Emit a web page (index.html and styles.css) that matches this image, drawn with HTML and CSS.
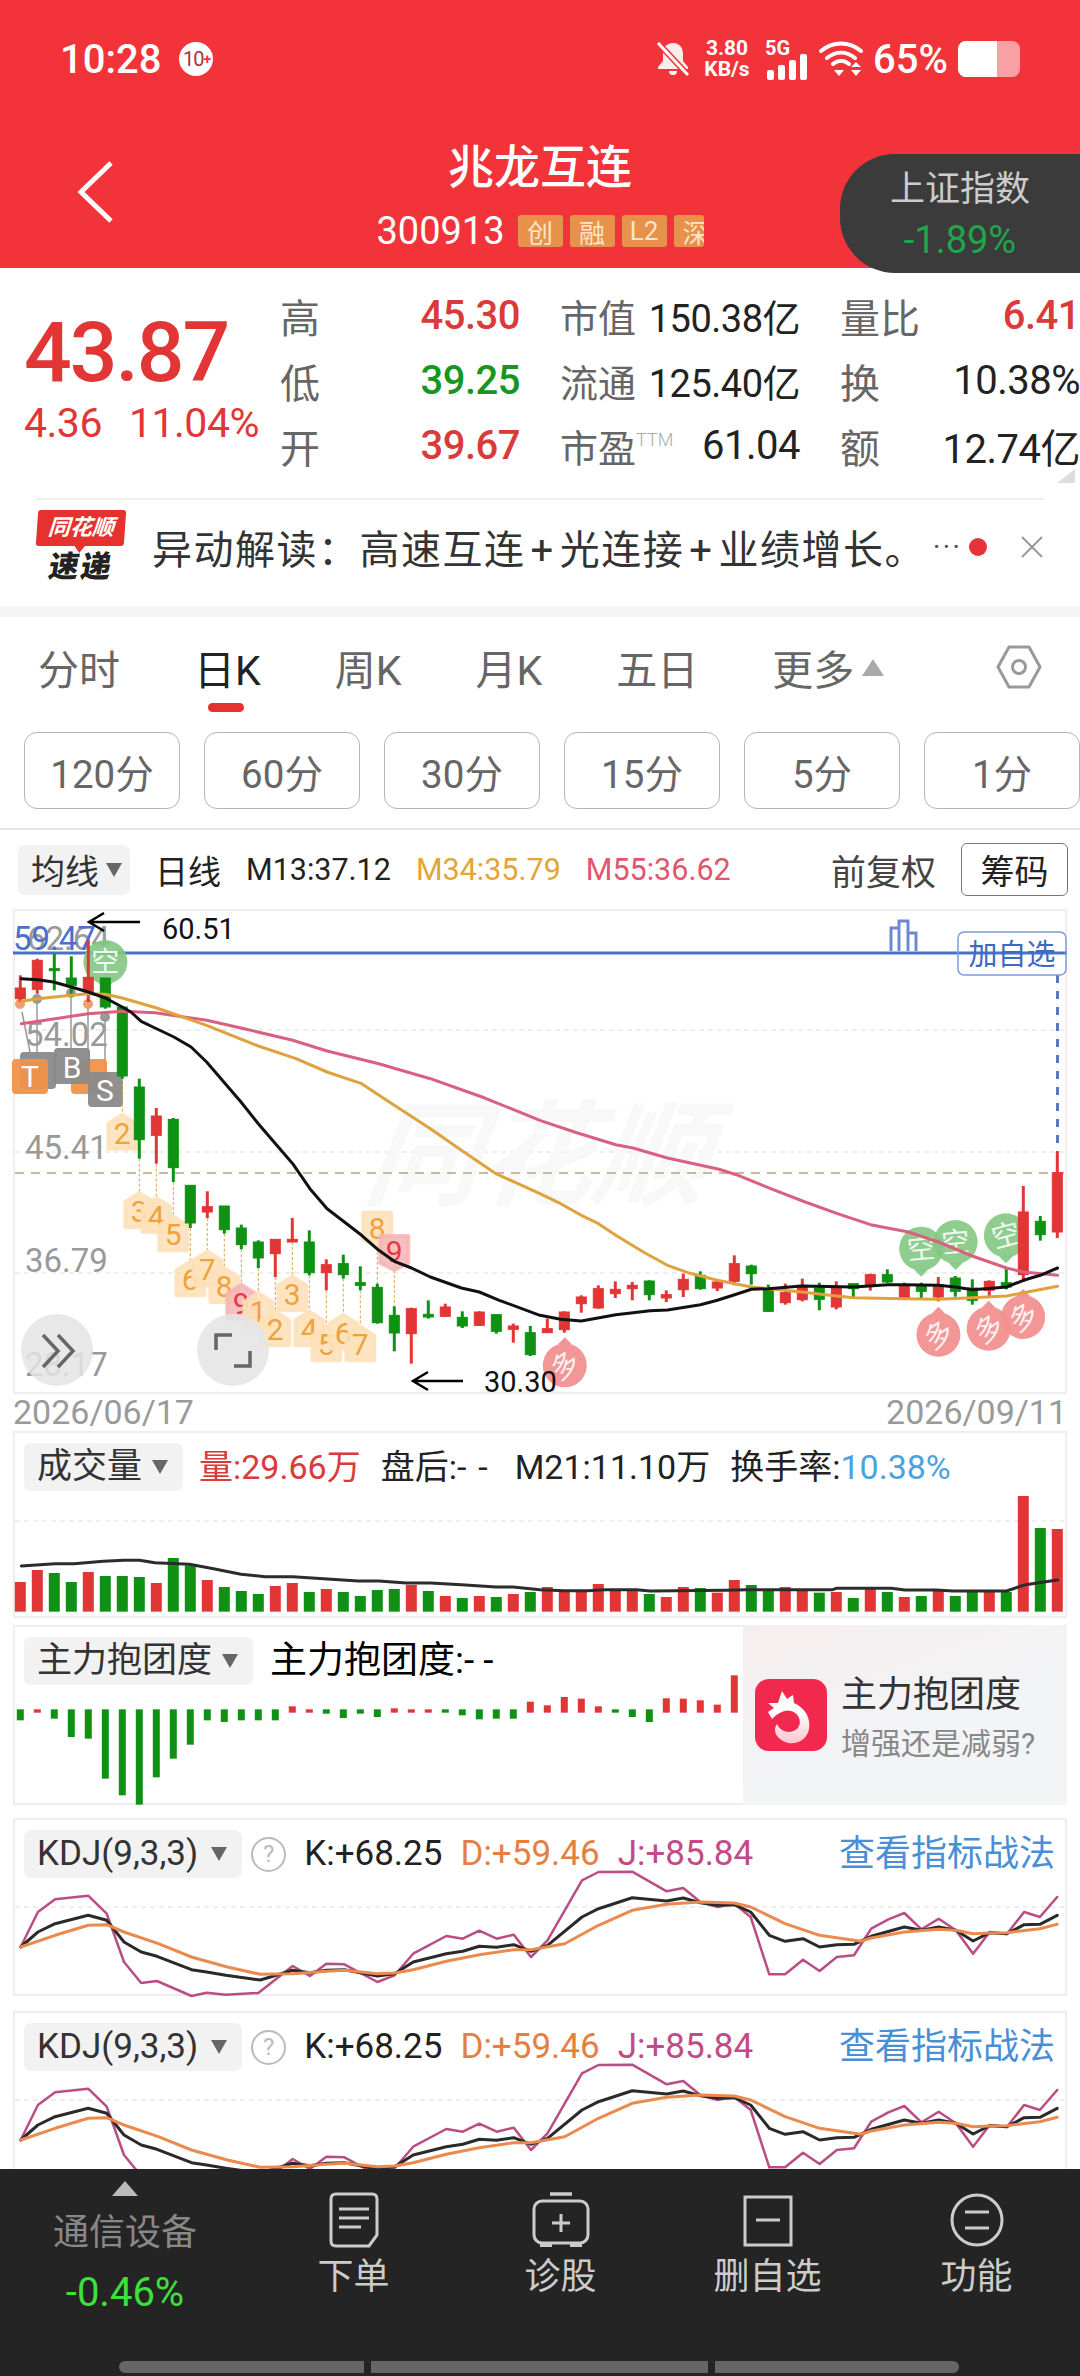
FILE: index.html
```html
<!DOCTYPE html>
<html lang="zh-CN">
<head>
    <meta charset="UTF-8">
    <meta name="viewport" content="width=device-width, initial-scale=1.0">
    <title>兆龙互连</title>
    <link rel="stylesheet" href="styles.css">
</head>
<body>
<div class="page">
    <header class="top">
        <div class="status">
            <span class="clock">10:28</span>
            <span class="count-badge">10<i>+</i></span>
            <div class="status-right">
                <svg class="bell" viewBox="0 0 34 36"><path d="M17 2c-7 0-10 5-10 11v7l-5 6v2h30v-2l-5-6v-7c0-6-3-11-10-11z" fill="#fff" fill-opacity=".9"/><path d="M13 30a4 4 0 0 0 8 0z" fill="#fff"/><path d="M2 2l30 32" stroke="#f2333a" stroke-width="6"/><path d="M2 2l30 32" stroke="#fff" stroke-width="3"/></svg>
                <div class="speed"><b>3.80</b><b>KB/s</b></div>
                <div class="net">
                    <b>5G</b>
                    <svg viewBox="0 0 42 26" width="42" height="26"><rect x="2" y="16" width="7" height="10" rx="2"/><rect x="13" y="11" width="7" height="15" rx="2"/><rect x="24" y="6" width="7" height="20" rx="2"/><rect x="35" y="0" width="7" height="26" rx="2"/></svg>
                </div>
                <svg class="wifi" viewBox="0 0 44 36"><path d="M2 10c12-10 28-10 40 0M8 17c9-7 19-7 28 0M14 23c5-4 11-4 16 0" fill="none" stroke="#fff" stroke-width="4" stroke-linecap="round"/><path d="M15 29h10l-5 6zM32 26l5-5 5 5zM32 29h10l-5 6z" fill="#fff"/></svg>
                <span class="battery-text">65%</span>
                <div class="battery"><div class="battery-fill"></div></div>
            </div>
        </div>
        <div class="title-bar">
            <svg class="back" viewBox="0 0 36 62" width="36" height="62"><path d="M34 2L4 31l30 29" fill="none" stroke="#fff" stroke-width="5"/></svg>
            <h1 class="name">兆龙互连</h1>
            <div class="code-row">
                <span class="code">300913</span>
                <span class="tag">创</span>
                <span class="tag">融</span>
                <span class="tag">L2</span>
                <span class="tag tag-cut">深</span>
            </div>
        </div>
        <div class="index-pill">
            <span class="index-name">上证指数</span>
            <span class="index-value">-1.89%</span>
        </div>
    </header>

    <section class="quote">
        <div class="price-box">
            <div class="price">43.87</div>
            <div class="change"><span>4.36</span><span>11.04%</span></div>
        </div>
        <div class="stats">
            <div class="stat"><span class="lbl">高</span><span class="val up">45.30</span></div>
            <div class="stat"><span class="lbl small">市值</span><span class="val dark narrow">150.38亿</span></div>
            <div class="stat"><span class="lbl">量比</span><span class="val up">6.41</span></div>
            <div class="stat"><span class="lbl">低</span><span class="val down">39.25</span></div>
            <div class="stat"><span class="lbl small">流通</span><span class="val dark narrow">125.40亿</span></div>
            <div class="stat"><span class="lbl">换</span><span class="val dark">10.38%</span></div>
            <div class="stat"><span class="lbl">开</span><span class="val up">39.67</span></div>
            <div class="stat"><span class="lbl small">市盈<sup>TTM</sup></span><span class="val dark">61.04</span></div>
            <div class="stat"><span class="lbl">额</span><span class="val dark">12.74亿</span></div>
        </div>
        <div class="corner"></div>
    </section>

    <section class="news">
        <div class="news-logo">
            <div class="news-flag"><span>同花顺</span></div>
            <div class="news-sub">速递</div>
        </div>
        <p class="news-text">异动解读：高速互连<i class="plus">+</i>光连接<i class="plus">+</i>业绩增长。</p>
        <span class="news-more">···</span>
        <span class="news-dot"></span>
        <svg class="news-close" viewBox="0 0 24 24" width="24" height="24"><path d="M2 2l20 20M22 2L2 22" stroke="#999" stroke-width="2"/></svg>
    </section>

    <nav class="tabs">
        <span class="tab">分时</span>
        <span class="tab active">日K</span>
        <span class="tab">周K</span>
        <span class="tab">月K</span>
        <span class="tab">五日</span>
        <span class="tab">更多<i class="tab-up"></i></span>
        <svg class="tab-gear" viewBox="0 0 48 48" width="48" height="48"><path d="M14 4h20l11 20-11 20H14L3 24z" fill="none" stroke="#999" stroke-width="3" stroke-linejoin="round"/><circle cx="24" cy="24" r="6.5" fill="none" stroke="#999" stroke-width="3"/></svg>
    </nav>

    <div class="periods">
        <span class="period">120分</span>
        <span class="period">60分</span>
        <span class="period">30分</span>
        <span class="period">15分</span>
        <span class="period">5分</span>
        <span class="period">1分</span>
    </div>

    <div class="ma-row">
        <span class="chip ma-chip">均线<i class="caret"></i></span>
        <span class="ma-kind">日线</span>
        <span>M13:37.12</span>
        <span class="c-m34">M34:35.79</span>
        <span class="c-m55">M55:36.62</span>
        <span class="ma-fq">前复权</span>
        <span class="ma-btn">筹码</span>
    </div>

    <div class="panel panel-main">
        <svg class="plot" viewBox="15 909 1050 481">
            <line class="grid" x1="15" x2="1065" y1="1028" y2="1028"/>
            <line class="grid" x1="15" x2="1065" y1="1150" y2="1150"/>
            <line class="grid" x1="15" x2="1065" y1="1271" y2="1271"/>
            <g transform="translate(362 1194) skewX(-8)"><text class="watermark" x="0" y="0">同花顺</text></g>
            <text class="axis" x="25" y="1044">54.02</text>
            <text class="axis" x="25" y="1157">45.41</text>
            <text class="axis" x="25" y="1270">36.79</text>
            <text class="axis" x="25" y="1374">28.17</text>
            <text class="axis" x="27" y="948">62.64</text>
            <text class="axis blue" x="13" y="948">59.47</text>
            <line class="prev-close" x1="15" x2="1065" y1="1171" y2="1171"/>
            <line class="high-line" x1="13" x2="1067" y1="951" y2="951"/>
            <g id="tradeMarks">
                <path class="trade-link" d="M37 997V1050M71 991V1046M105 1015V1070M88 1002V1057M22 1010L30 1050"/>
                <circle class="dot-o" cx="20" cy="1002" r="5"/>
                <circle class="dot-g" cx="37" cy="997" r="5"/>
                <circle class="dot-g" cx="71" cy="991" r="5"/>
                <circle class="dot-o" cx="88" cy="1002" r="5"/>
                <circle class="dot-g" cx="105" cy="1015" r="5"/>
                <rect class="trade-g" x="20" y="1050" width="36" height="37" rx="4"/>
                <rect class="trade-o" x="12" y="1057" width="36" height="35" rx="4"/>
                <rect class="trade-o" x="71" y="1057" width="36" height="35" rx="4"/>
                <rect class="trade-g" x="54" y="1046" width="36" height="36" rx="4"/>
                <rect class="trade-g" x="88" y="1070" width="35" height="35" rx="4"/>
                <text class="trade-t" x="30" y="1085">T</text>
                <text class="trade-t" x="72" y="1076">B</text>
                <text class="trade-t" x="105" y="1099">S</text>
            </g>
            <g id="badges"></g>
            <g id="pins"></g>
            <g id="candles"></g>
            <g id="maLines"></g>
            <path class="arrow" d="M140 920H90M104 911l-15 9 15 9"/>
            <text class="note" x="162" y="937">60.51</text>
            <path class="arrow" d="M463 1379H413M428 1370l-15 9 15 9"/>
            <text class="note" x="484" y="1390">30.30</text>
            <path class="bars-icon" d="M891 949V926H899V949M899 949V919H908V949M908 949V931H916V949"/>
            <line class="high-drop" x1="1057.5" x2="1057.5" y1="973" y2="1150"/>
            <rect class="add-box" x="958" y="930" width="108" height="43" rx="6"/>
            <text class="add-text" x="1012" y="963">加自选</text>
            <circle class="float-btn" cx="57" cy="1348" r="36"/>
            <path class="float-ico" d="M43 1333l15 16-15 16M58 1333l15 16-15 16"/>
            <circle class="float-btn" cx="233" cy="1348" r="36"/>
            <path class="float-ico" d="M216 1348V1333H232M234 1364H250V1349"/>
        </svg>
    </div>
    <div class="dates"><span>2026/06/17</span><span>2026/09/11</span></div>

    <div class="panel panel-vol">
        <svg class="plot" viewBox="15 1431 1050 183">
            <line class="grid" x1="15" x2="1065" y1="1519" y2="1519"/>
            <g id="volume"></g>
        </svg>
        <div class="panel-head head-wide">
            <span class="chip">成交量<i class="caret"></i></span>
            <span class="c-red">量:29.66万</span>
            <span>盘后:<i class="dash">--</i></span>
            <span class="tight">M21:11.10万</span>
            <span>换手率:<em class="c-blue">10.38%</em></span>
        </div>
    </div>

    <div class="panel panel-hold">
        <svg class="plot" viewBox="15 1625 1050 176">
            <g id="hold"></g>
        </svg>
        <div class="panel-head">
            <span class="chip">主力抱团度<i class="caret"></i></span>
            <span class="hold-label">主力抱团度:<i class="dash-hold">--</i></span>
        </div>
        <div class="promo">
            <div class="promo-icon">
                <svg viewBox="0 0 72 72" width="72" height="72"><defs><linearGradient id="drg" x1="0" y1="0" x2="0" y2="1"><stop offset="0.4" stop-color="#fff"/><stop offset="1" stop-color="#ffc4cf"/></linearGradient></defs><path fill="url(#drg)" d="M27 12l5 8 6-4 1 8C50 29 56 39 54 50 52 62 38 68 28 62 20 58 18 50 22 45c3 7 12 11 20 5 6-6 2-16-6-18-6-2-13 2-19 8l-4-7 6-4-6-5h10z"/></svg>
            </div>
            <div class="promo-text">
                <strong>主力抱团度</strong>
                <span>增强还是减弱?</span>
            </div>
        </div>
    </div>

    <div class="panel panel-kdj">
        <svg class="plot kdj-plot" viewBox="15 1818 1050 174"></svg>
        <div class="panel-head head-kdj">
            <span class="chip kdj-chip">KDJ(9,3,3)<i class="caret"></i></span>
            <span class="help">?</span>
            <span>K:+68.25</span>
            <span class="c-d">D:+59.46</span>
            <span class="c-j">J:+85.84</span>
            <span class="c-link">查看指标战法</span>
        </div>
    </div>

    <div class="panel panel-kdj panel-cut">
        <svg class="plot kdj-plot" viewBox="15 1818 1050 174"></svg>
        <div class="panel-head head-kdj">
            <span class="chip kdj-chip">KDJ(9,3,3)<i class="caret"></i></span>
            <span class="help">?</span>
            <span>K:+68.25</span>
            <span class="c-d">D:+59.46</span>
            <span class="c-j">J:+85.84</span>
            <span class="c-link">查看指标战法</span>
        </div>
    </div>

    <footer class="bottom">
        <div class="bottom-main">
            <div class="sector">
                <i class="sector-up"></i>
                <span class="sector-name">通信设备</span>
                <span class="sector-val">-0.46%</span>
            </div>
            <div class="action">
                <svg viewBox="0 0 50 56" width="50" height="56"><path d="M7 2h36q5 0 5 5v36l-8 11H7q-5 0-5-5V7q0-5 5-5z" fill="none" stroke="#ccc" stroke-width="3"/><path d="M10 17h30M10 26h30M10 35h22" stroke="#ccc" stroke-width="3"/></svg>
                <span>下单</span>
            </div>
            <div class="action">
                <svg viewBox="0 0 58 56" width="58" height="56"><path d="M18 2h22" stroke="#ccc" stroke-width="3.5"/><rect x="2" y="9" width="54" height="42" rx="8" fill="none" stroke="#ccc" stroke-width="3"/><path d="M29 22v18M20 31h18" stroke="#ccc" stroke-width="3"/><path d="M8 50h12v5H8zM38 50h12v5H38z" fill="#ccc"/></svg>
                <span>诊股</span>
            </div>
            <div class="action">
                <svg viewBox="0 0 50 56" width="50" height="56"><rect x="2" y="5" width="46" height="48" fill="none" stroke="#ccc" stroke-width="3"/><path d="M13 28h24" stroke="#ccc" stroke-width="3"/></svg>
                <span>删自选</span>
            </div>
            <div class="action action-last">
                <svg viewBox="0 0 56 56" width="56" height="56"><circle cx="28" cy="28" r="25" fill="none" stroke="#ccc" stroke-width="3"/><path d="M16 20h24M16 36h24" stroke="#ccc" stroke-width="3"/></svg>
                <span>功能</span>
            </div>
        </div>
        <div class="home-bar"><i></i><i></i><i></i></div>
    </footer>
</div>
<script src="chart.js"></script>
</body>
</html>
```

FILE: styles.css
```css
* {
    box-sizing: border-box;
}
body {
    margin: 0;
    background: #fff;
    font-family: Roboto, "Noto Sans CJK SC", sans-serif;
    color: #222;
}
i, em {
    font-style: normal;
}
.page {
    position: relative;
    width: 1080px;
    height: 2376px;
    overflow: hidden;
}

/* red header */
.top {
    position: relative;
    height: 268px;
    background: #f2333a;
    color: #fff;
}
.status {
    display: flex;
    align-items: center;
    height: 118px;
    padding: 0 60px;
}
.clock {
    font-size: 40px;
    font-weight: 500;
}
.count-badge {
    display: flex;
    align-items: center;
    justify-content: center;
    width: 34px;
    height: 34px;
    margin-left: 18px;
    border-radius: 50%;
    background: #fff;
    color: #a8323a;
    font-size: 20px;
    letter-spacing: -1px;
}
.count-badge i {
    color: #f2333a;
    font-size: 14px;
    font-weight: 700;
}
.status-right {
    display: flex;
    align-items: center;
    margin-left: auto;
}
.bell {
    width: 34px;
    height: 36px;
    margin-right: 13px;
}
.speed {
    display: flex;
    flex-direction: column;
    align-items: center;
    width: 48px;
    margin-right: 14px;
    font-size: 21px;
    line-height: 21px;
}
.net {
    display: flex;
    flex-direction: column;
    width: 44px;
    margin-right: 10px;
    font-size: 20px;
    line-height: 18px;
    fill: #fff;
}
.net svg {
    margin-top: -3px;
}
.wifi {
    width: 44px;
    height: 36px;
    margin-right: 10px;
}
.battery-text {
    width: 85px;
    font-size: 40px;
    font-weight: 500;
}
.battery {
    width: 62px;
    height: 36px;
    border-radius: 8px;
    background: #f9a0a4;
    overflow: hidden;
}
.battery-fill {
    width: 39px;
    height: 100%;
    background: #fff;
}
.title-bar {
    position: relative;
    display: flex;
    flex-direction: column;
    align-items: center;
    height: 150px;
}
.back {
    position: absolute;
    left: 77px;
    top: 43px;
}
.name {
    margin: 21px 0 0;
    font-size: 46px;
    font-weight: 500;
    line-height: 56px;
}
.code-row {
    display: flex;
    align-items: center;
    gap: 7px;
    margin-top: 20px;
}
.code {
    margin-right: 6px;
    font-size: 38px;
    line-height: 32px;
}
.tag {
    display: flex;
    align-items: center;
    justify-content: center;
    width: 45px;
    height: 32px;
    border-radius: 3px;
    background: #e7914a;
    color: #fde4c8;
    font-size: 26px;
    overflow: hidden;
}
.tag-cut {
    justify-content: flex-start;
    width: 30px;
    padding-left: 9px;
}
.index-pill {
    position: absolute;
    z-index: 2;
    top: 154px;
    left: 840px;
    display: flex;
    flex-direction: column;
    align-items: center;
    width: 240px;
    height: 119px;
    padding-top: 11px;
    border-radius: 55px 0 0 55px;
    background: #3b3b3b;
}
.index-name {
    color: #ccc;
    font-size: 35px;
    line-height: 50px;
}
.index-value {
    color: #1fa64a;
    font-size: 38px;
    line-height: 50px;
}

/* quote block */
.quote {
    position: relative;
    display: flex;
    height: 230px;
    padding-left: 24px;
}
.price-box {
    width: 257px;
    color: #e23535;
}
.price {
    margin-top: 40px;
    font-size: 84px;
    font-weight: 500;
    line-height: 90px;
    letter-spacing: -2px;
}
.change {
    display: flex;
    gap: 27px;
    margin-top: 3px;
    font-size: 41px;
    line-height: 44px;
    letter-spacing: -.5px;
}
.stats {
    display: grid;
    grid-template-columns: repeat(3, 240px);
    grid-auto-rows: 65px;
    column-gap: 40px;
    padding-top: 15px;
}
.stat {
    display: flex;
    align-items: center;
    justify-content: space-between;
}
.lbl {
    color: #666;
    font-size: 40px;
}
.lbl.small {
    font-size: 38px;
}
.lbl sup {
    color: #aaa;
    font-size: 18px;
    font-weight: 300;
    vertical-align: 16px;
    line-height: 0;
}
.val {
    font-size: 40px;
    font-weight: 500;
    letter-spacing: -.5px;
}
.up {
    color: #d93a3a;
}
.down {
    color: #17961f;
}
.dark {
    color: #222;
    font-weight: 400;
}
.narrow {
    font-size: 38px;
}
.corner {
    position: absolute;
    right: 5px;
    bottom: 15px;
    width: 0;
    height: 0;
    border-left: 18px solid transparent;
    border-bottom: 14px solid #ddd;
}

/* news strip */
.news {
    position: relative;
    display: flex;
    align-items: center;
    height: 119px;
    padding: 0 36px 11px 37px;
    border-bottom: 11px solid #f5f5f5;
}
.news::before {
    content: "";
    position: absolute;
    top: 0;
    left: 36px;
    right: 36px;
    border-top: 2px solid #efefef;
}
.news-logo {
    width: 88px;
    text-align: center;
}
.news-flag {
    position: relative;
    height: 36px;
    border-radius: 3px;
    background: #e5322f;
    transform: skewX(-4deg);
}
.news-flag::after {
    content: "";
    position: absolute;
    left: 38px;
    bottom: -7px;
    border-left: 6px solid transparent;
    border-right: 6px solid transparent;
    border-top: 8px solid #e5322f;
}
.news-flag span {
    color: #fff;
    font-size: 22px;
    font-weight: 700;
    line-height: 36px;
    font-style: italic;
}
.news-sub {
    margin-top: 4px;
    font-size: 30px;
    font-weight: 900;
    line-height: 34px;
    letter-spacing: 2px;
    transform: skewX(-10deg);
}
.news-text {
    flex: 0 0 771px;
    margin: 0 0 0 27px;
    font-size: 40px;
    letter-spacing: 1.5px;
    color: #333;
    white-space: nowrap;
}
.plus {
    margin: 0 5px;
}
.news-more {
    flex: 0 0 43px;
    color: #555;
    font-size: 30px;
    letter-spacing: 2px;
    text-align: center;
}
.news-dot {
    width: 18px;
    height: 18px;
    border-radius: 50%;
    background: #e8323a;
}
.news-close {
    margin-left: auto;
}

/* tabs */
.tabs {
    display: flex;
    align-items: center;
    gap: 74px;
    height: 100px;
    padding: 0 37px 0 38px;
    color: #666;
    font-size: 41px;
}
.tab {
    position: relative;
    display: flex;
    align-items: center;
}
.tab.active {
    color: #222;
}
.tab.active::after {
    content: "";
    position: absolute;
    left: 14px;
    bottom: -15px;
    width: 36px;
    height: 9px;
    border-radius: 5px;
    background: #e5322f;
}
.tab-up {
    width: 0;
    height: 0;
    margin-left: 8px;
    border-left: 11px solid transparent;
    border-right: 11px solid transparent;
    border-bottom: 17px solid #aaa;
}
.tab-gear {
    margin-left: auto;
}
.periods {
    display: flex;
    gap: 24px;
    height: 98px;
    margin-top: 15px;
    padding: 0 0 19px 24px;
    border-bottom: 2px solid #e6e6e6;
    overflow: hidden;
}
.period {
    display: flex;
    flex: 0 0 156px;
    align-items: center;
    justify-content: center;
    height: 77px;
    border: 1px solid #b5b5b5;
    border-radius: 13px;
    color: #666;
    font-size: 38.5px;
}

/* moving average row */
.ma-row {
    display: flex;
    align-items: center;
    gap: 25px;
    height: 79px;
    padding: 0 12px 0 18px;
    font-size: 30.5px;
}
.chip {
    display: inline-flex;
    align-items: center;
    height: 48px;
    padding: 0 15px 0 13px;
    border-radius: 7px;
    background: #f2f2f2;
    color: #333;
    font-size: 35px;
}
.ma-chip {
    height: 50px;
    font-size: 34px;
    padding-right: 8px;
}
.ma-chip .caret {
    margin-left: 7px;
}
.ma-kind {
    font-size: 33px;
}
.kdj-chip .caret {
    margin-left: 13px;
}
.caret {
    width: 0;
    height: 0;
    margin-left: 10px;
    border-left: 8px solid transparent;
    border-right: 8px solid transparent;
    border-top: 14px solid #666;
}
.c-m34 {
    color: #e3a534;
}
.c-m55 {
    color: #e0566f;
}
.ma-fq {
    margin-left: auto;
    color: #444;
    font-size: 35px;
}
.ma-btn {
    display: flex;
    align-items: center;
    justify-content: center;
    width: 107px;
    height: 53px;
    border: 1px solid #777;
    border-radius: 6px;
    font-size: 34px;
}

/* chart panels */
.panel {
    position: relative;
    margin: 0 13px;
    border: 2px solid #eee;
}
.panel-main {
    height: 485px;
}
.panel-vol {
    height: 187px;
}
.panel-hold {
    height: 180px;
    margin-top: 7px;
}
.panel-kdj {
    height: 178px;
    margin-top: 13px;
}
.panel-cut {
    height: 160px;
    margin-top: 15px;
    border-bottom: 0;
    overflow: hidden;
}
.plot {
    position: absolute;
    top: 0;
    left: 0;
    width: 1050px;
    height: 100%;
    overflow: visible;
}
.panel-cut .plot {
    height: 174px;
}
.panel-head {
    position: relative;
    display: flex;
    align-items: center;
    gap: 17px;
    padding: 10px 9px 0;
    font-size: 34px;
    line-height: 48px;
    white-space: nowrap;
}
.head-wide {
    gap: 20px;
}
.head-wide .chip {
    margin-right: -4px;
}
.head-kdj {
    gap: 18px;
    font-size: 35px;
}
.c-red {
    color: #d93a3a;
}
.c-blue {
    color: #4aa3dc;
}
.c-d {
    color: #e57f3f;
}
.c-j {
    color: #c24a86;
}
.c-link {
    margin-left: auto;
    margin-right: 1px;
    color: #4a8fd6;
    font-size: 36px;
}
.tight {
    margin-left: -5px;
}
.dash {
    letter-spacing: 12px;
}
.dash-hold {
    letter-spacing: 9px;
}
.help {
    display: flex;
    align-items: center;
    justify-content: center;
    width: 35px;
    height: 35px;
    margin-left: -9px;
    border: 2px solid #bbb;
    border-radius: 50%;
    color: #bbb;
    font-size: 24px;
}
.hold-label {
    color: #000;
    font-size: 37px;
}
.promo {
    position: absolute;
    top: -2px;
    right: -2px;
    display: flex;
    align-items: flex-start;
    width: 324px;
    height: 180px;
    padding: 54px 0 0 12px;
    background: linear-gradient(160deg, #f6eeee, #f2f4f6 60%);
}
.promo-icon {
    width: 72px;
    height: 72px;
    border-radius: 14px;
    background: #f2294f;
}
.promo-text {
    display: flex;
    flex-direction: column;
    margin: -4px 0 0 14px;
}
.promo-text strong {
    color: #333;
    font-size: 36px;
    font-weight: 400;
    line-height: 40px;
}
.promo-text span {
    margin-top: 9px;
    color: #888;
    font-size: 30px;
    line-height: 40px;
}
.dates {
    display: flex;
    justify-content: space-between;
    height: 37px;
    padding: 0 13px;
    color: #9a9a9a;
    font-size: 34px;
    line-height: 37px;
}

/* svg pieces */
.grid {
    stroke: #ddd;
    stroke-width: 1;
    stroke-dasharray: 5 4;
}
.prev-close {
    stroke: #b9a27e;
    stroke-width: 1.5;
    stroke-dasharray: 9 7;
}
.high-line {
    stroke: #4a70c9;
    stroke-width: 3;
}
.high-drop {
    stroke: #5a78c0;
    stroke-width: 3;
    stroke-dasharray: 8 8;
}
.watermark {
    fill: #f8f8f8;
    font-size: 114px;
    font-style: italic;
    font-weight: 700;
}
.axis {
    fill: #999;
    font-size: 33px;
}
.axis.blue {
    fill: #4a70c9;
}
.note {
    fill: #111;
    font-size: 29px;
}
.arrow {
    fill: none;
    stroke: #000;
    stroke-width: 2.5;
}
.add-box {
    fill: none;
    stroke: #7f9bdc;
    stroke-width: 1.5;
}
.add-text {
    fill: #3f69c6;
    font-size: 29px;
    text-anchor: middle;
}
.bars-icon {
    fill: none;
    stroke: #7088d0;
    stroke-width: 3;
}
.trade-link {
    fill: none;
    stroke: #999;
    stroke-width: 1.5;
}
.dot-o {
    fill: #f0a070;
}
.dot-g {
    fill: #999;
}
.trade-o {
    fill: #f0924a;
    fill-opacity: .95;
}
.trade-g {
    fill: #8a8a8a;
    fill-opacity: .95;
}
.trade-t {
    fill: #fff;
    font-size: 30px;
    text-anchor: middle;
}
.float-btn {
    fill: #e4e4e4;
    fill-opacity: .85;
}
.float-ico {
    fill: none;
    stroke: #666;
    stroke-width: 3.5;
}
.badge {
    fill: #fde0b8;
    fill-opacity: .85;
    stroke: #fde0b8;
    stroke-opacity: .85;
    stroke-width: 4;
    stroke-linejoin: round;
}
.badge-top {
    fill: #f5b5b5;
    stroke: #f5b5b5;
}
.badge-num {
    fill: #efa23a;
    font-size: 30px;
    text-anchor: middle;
}
.badge-num.top {
    fill: #e6384a;
}
.badge-link {
    stroke: #dca456;
    stroke-width: 1;
    stroke-dasharray: 3 2;
}
.pin-up {
    fill: #82c882;
    fill-opacity: .9;
}
.pin-down {
    fill: #f19090;
    fill-opacity: .95;
}
.pin-text {
    fill: #fff;
    font-size: 28px;
    text-anchor: middle;
    fill-opacity: .9;
}
.line {
    fill: none;
    stroke-linejoin: round;
    stroke-linecap: round;
}
.line-m13 {
    stroke: #111;
    stroke-width: 3;
}
.line-m34 {
    stroke: #dfa23e;
    stroke-width: 3;
}
.line-m55 {
    stroke: #d9607f;
    stroke-width: 3;
}
.line-vol {
    stroke: #2c2c2c;
    stroke-width: 3;
}
.line-k {
    stroke: #2a2a2a;
    stroke-width: 3;
}
.line-d {
    stroke: #ea8a4e;
    stroke-width: 3;
}
.line-j {
    stroke: #b94d84;
    stroke-width: 2.5;
}
.red {
    fill: #e23535;
    stroke: #e23535;
}
.green {
    fill: #0f9114;
    stroke: #0f9114;
}

/* bottom bar */
.bottom {
    position: absolute;
    left: 0;
    right: 0;
    bottom: 0;
    height: 207px;
    background: #242424;
}
.bottom-main {
    display: grid;
    grid-template-columns: 250px repeat(4, 207px);
    height: 192px;
}
.sector {
    display: flex;
    flex-direction: column;
    align-items: center;
    padding-top: 12px;
}
.sector-up {
    width: 0;
    height: 0;
    border-left: 13px solid transparent;
    border-right: 13px solid transparent;
    border-bottom: 15px solid #bbb;
}
.sector-name {
    margin-top: 15px;
    color: #888;
    font-size: 36px;
    line-height: 44px;
}
.sector-val {
    margin-top: 16px;
    color: #3ee03c;
    font-size: 40px;
    line-height: 44px;
}
.action {
    display: flex;
    flex-direction: column;
    align-items: center;
    padding-top: 23px;
    color: #ccc;
    font-size: 36px;
    line-height: 40px;
}
.action span {
    margin-top: 9px;
}
.action-last {
    padding-left: 4px;
}
.home-bar {
    display: flex;
    gap: 7px;
    height: 12px;
    margin-left: 119px;
}
.home-bar i {
    width: 337px;
    background: #666;
}
.home-bar i:first-child {
    width: 245px;
    border-radius: 6px 0 0 6px;
}
.home-bar i:last-child {
    width: 244px;
    border-radius: 0 6px 6px 0;
}
```

FILE: chart.js
```js
// everything below was read off 3x crops, so y values are in thirds of a pixel
const SVGNS = 'http://www.w3.org/2000/svg';
const leftX = x => x / 2.904;
const rightX = x => 540 + x / 2.904;
const barX = i => 20.3 + 17 * i;

function add(parent, tag, attrs, text) {
    const el = document.createElementNS(SVGNS, tag);
    for (const k in attrs) el.setAttribute(k, attrs[k]);
    if (text) el.textContent = text;
    parent.appendChild(el);
    return el;
}

function poly(parent, cls, pts) {
    add(parent, 'polyline', { class: 'line ' + cls, points: pts.map(p => p[0].toFixed(1) + ',' + p[1].toFixed(1)).join(' ') });
}

function joined(top, left, right) {
    return left.map(p => [leftX(p[0]), top + p[1] / 3]).concat(right.map(p => [rightX(p[0]), top + p[1] / 3]));
}

// [wickTop, bodyTop, bodyBottom, wickBottom, up]
const candles = [
    [220,258,290,300,1],[170,175,262,275,1],[155,200,205,265,0],[163,228,250,285,0],[115,226,270,300,1],
    [228,228,315,320,0],[315,315,522,530,0],[530,555,713,770,0],[618,642,700,785,1],[648,652,797,840,0],
    [850,850,963,978,0],[868,914,930,948,1],[912,912,983,995,0],[968,978,1028,1042,0],[1015,1020,1068,1098,0],
    [1012,1012,1055,1125,1],[948,1012,1020,1020,1],[985,1020,1112,1120,0],[1072,1088,1112,1165,1],[1058,1085,1118,1130,0],
    [1093,1142,1150,1165,0],[1145,1156,1262,1265,0],[1213,1240,1293,1348,0],[1217,1220,1295,1385,1],[1195,1237,1245,1250,0],
    [1205,1215,1243,1245,1],[1228,1246,1272,1278,0],[1228,1230,1270,1272,1],[1238,1238,1288,1295,0],[1265,1272,1282,1322,1],
    [1272,1292,1358,1362,0],[1250,1280,1292,1292,1],[1228,1230,1283,1292,1],[1180,1185,1205,1232,1],[1150,1160,1218,1220,1],
    [1138,1162,1175,1188,1],[1140,1150,1160,1195,1],[1135,1137,1178,1195,0],[1165,1178,1188,1200,1],[1115,1132,1163,1185,1],
    [1108,1120,1160,1163,0],[1135,1140,1158,1167,1],[1060,1085,1138,1150,1],[1088,1092,1115,1148,0],[1148,1158,1228,1230,0],
    [1145,1172,1202,1208,1],[1130,1150,1193,1198,1],[1142,1158,1192,1225,0],[1138,1158,1215,1222,1],[1145,1145,1160,1190,0],
    [1115,1118,1150,1166,1],[1102,1118,1140,1143,0],[1142,1148,1188,1190,1],[1142,1150,1168,1188,0],[1125,1148,1185,1198,1],
    [1122,1128,1168,1184,0],[1132,1158,1195,1208,0],[1135,1138,1165,1182,1],[1098,1142,1155,1162,0],[852,930,1118,1140,1],
    [942,958,998,1016,0],[750,812,990,1008,1]
];

const m13 = joined(900,
    [[62,230],[110,233],[155,240],[207,255],[256,270],[306,288],[355,315],[380,330],[410,358],[450,378],[505,405],[555,435],[600,480],[650,540],[700,600],[750,665],[800,725],[850,785],[900,860],[950,920],[1000,960],[1050,1000],[1100,1045],[1145,1078],[1195,1098],[1250,1125],[1340,1158],[1392,1170],[1450,1195],[1568,1240]],
    [[60,1252],[120,1257],[220,1238],[320,1226],[370,1224],[466,1208],[515,1195],[565,1178],[614,1162],[663,1160],[760,1152],[912,1155],[1010,1148],[1058,1148],[1157,1150],[1206,1155],[1256,1163],[1355,1155],[1404,1135],[1453,1120],[1503,1098]]);
const m34 = joined(900,
    [[62,298],[110,290],[207,280],[256,275],[306,277],[355,288],[455,318],[600,370],[750,432],[860,470],[950,510],[1050,545],[1145,610],[1250,680],[1340,745],[1440,815],[1568,875]],
    [[60,905],[120,940],[170,965],[220,1000],[300,1050],[370,1090],[430,1112],[515,1135],[614,1155],[663,1160],[760,1170],[861,1182],[910,1187],[1058,1190],[1157,1192],[1255,1187],[1355,1182],[1404,1172],[1503,1153]]);
const m55 = joined(900,
    [[62,365],[150,352],[256,335],[355,328],[450,332],[600,355],[700,378],[850,415],[950,447],[1100,485],[1250,530],[1400,585],[1568,655]],
    [[100,690],[220,728],[270,738],[370,768],[520,802],[570,818],[670,860],[770,900],[870,937],[960,968],[1070,990],[1157,1020],[1255,1062],[1355,1098],[1404,1110],[1503,1120]]);

// [candle index, y centre, digit, flat badge]
const badges = [
    [6,695,2],[7,930,3],[8,945,4],[9,1000,5],[10,1135,6],[11,1105,7],[12,1155,8],[13,1205,9],[14,1230,1],
    [15,1285,2],[16,1180,3],[17,1285,4],[18,1330,5],[19,1295,6],[20,1330,7],[21,980,8,1],[22,1050,9,1]
];

// [x, y centre, text, angle, tip direction]
const pins = [
    [leftX(306), 180, '空', 0, 1],
    [rightX(1107), 1040, '空', -5, 1],
    [rightX(1207), 1020, '空', -5, 1],
    [rightX(1353), 1000, '空', -15, 1],
    [rightX(72), 1390, '多', -35, -1],
    [rightX(1157), 1298, '多', -35, -1],
    [rightX(1303), 1280, '多', -35, -1],
    [rightX(1403), 1245, '多', -35, -1]
];

function drawMain() {
    const badgeBox = document.getElementById('badges');
    badges.forEach(([i, zy, n, flat]) => {
        const x = barX(i), y = 900 + zy / 3, c = candles[i];
        const top = n === 9;
        if (flat) {
            add(badgeBox, 'line', { class: 'badge-link', x1: x, x2: x, y1: y + 18, y2: 900 + c[0] / 3 });
            add(badgeBox, 'path', { class: 'badge' + (top ? ' badge-top' : ''), d: `M${x - 14} ${y - 16}h28v27l-14 7-14-7z` });
        } else {
            add(badgeBox, 'line', { class: 'badge-link', x1: x, x2: x, y1: 900 + c[3] / 3, y2: y - 20 });
            add(badgeBox, 'path', { class: 'badge' + (top ? ' badge-top' : ''), d: `M${x - 14} ${y - 10}l14-9 14 9v25h-28z` });
        }
        add(badgeBox, 'text', { class: 'badge-num' + (top ? ' top' : ''), x: x, y: y + 10 }, String(n));
    });

    const pinBox = document.getElementById('pins');
    pins.forEach(([x, zy, t, a, dir]) => {
        const y = 900 + zy / 3;
        add(pinBox, 'circle', { class: dir > 0 ? 'pin-up' : 'pin-down', cx: x, cy: y, r: 22 });
        add(pinBox, 'path', { class: dir > 0 ? 'pin-up' : 'pin-down', d: `M${x - 7} ${y + dir * 21}L${x} ${y + dir * 28}L${x + 7} ${y + dir * 21}z` });
        add(pinBox, 'text', { class: 'pin-text', x: x, y: y + 10, transform: `rotate(${a} ${x} ${y})` }, t);
    });

    const box = document.getElementById('candles');
    candles.forEach((c, i) => {
        const cls = c[4] ? 'red' : 'green';
        const x = barX(i);
        add(box, 'line', { class: cls, x1: x, x2: x, y1: 900 + c[0] / 3, y2: 900 + c[3] / 3, 'stroke-width': 3 });
        add(box, 'rect', { class: cls, x: x - 5, y: 900 + c[1] / 3, width: 10, height: Math.max((c[2] - c[1]) / 3, 2), 'stroke-width': 1 });
    });

    const lines = document.getElementById('maLines');
    poly(lines, 'line-m55', m55);
    poly(lines, 'line-m34', m34);
    poly(lines, 'line-m13', m13);
}

// [bar top, up]; baseline is 329
const volumes = [
    [240,1],[204,1],[213,0],[240,0],[210,1],[222,0],[222,0],[225,0],[243,1],[168,0],[190,0],[234,1],[255,0],[267,0],[276,0],[252,1],
    [243,1],[270,0],[261,1],[270,0],[282,0],[264,0],[261,0],[249,1],[267,0],[282,1],[288,0],[282,1],[285,0],[276,1],[270,0],
    [255,1],[265,1],[265,1],[246,1],[264,1],[264,1],[276,0],[285,1],[255,1],[258,0],[272,1],[234,1],[249,0],[264,0],[255,1],[264,1],
    [272,0],[270,1],[288,0],[258,1],[270,0],[285,1],[282,0],[261,1],[282,0],[267,0],[267,1],[270,0],[-18,1],[78,0],[81,1]
];
const m21 = joined(1500,
    [[62,192],[160,185],[215,185],[300,178],[360,175],[405,175],[450,182],[550,187],[620,200],[700,217],[770,224],[850,224],[940,230],[1040,237],[1100,237],[1180,243],[1250,243],[1340,248],[1440,255],[1490,255]],
    [[0,263],[70,266],[140,266],[190,263],[280,263],[320,267],[540,265],[600,263],[850,263],[860,259],[1020,259],[1060,264],[1150,264],[1200,267],[1355,267],[1410,248],[1503,234]]);

function drawVolume() {
    const box = document.getElementById('volume');
    volumes.forEach(([t, up], i) => {
        add(box, 'rect', { class: up ? 'red' : 'green', x: barX(i) - 5.5, y: 1500 + t / 3, width: 11, height: (329 - t) / 3, 'stroke-width': 0 });
    });
    poly(box, 'line-vol', m21);
}

// signed length from the zero line; red bars go up, green bars go down
const hold = [33,10,28,83,88,208,258,286,204,148,106,33,38,33,33,33,19,10,13,26,13,23,13,10,10,10,18,30,28,28,33,22,47,42,19,10,23,38,43,42,37,24,112]
    .map((v, i) => [v, [1,16,17,22,23,24,30,31,32,33,34,38,39,40,41,42].includes(i)]);

function drawHold() {
    const box = document.getElementById('hold');
    hold.forEach(([v, up], i) => {
        const y = up ? 1400 + (932 - v) / 3 : 1400 + 922 / 3;
        add(box, 'rect', { class: up ? 'red' : 'green', x: barX(i) - 3.5, y: y, width: 7, height: v / 3, 'stroke-width': 0 });
    });
}

const kdjJ = [[30,435],[55,330],[80,292],[128,281],[155,335],[180,480],[205,543],[228,537],[278,582],[300,572],[328,578],[375,573],[425,492],[450,522],[474,485],[500,487],[548,540],[573,520],[600,455],[648,402],[672,410],[696,386],[721,410],[746,398],[771,465],[795,415],[845,235],[869,210],[918,209],[968,268],[992,258],[1017,300],[1042,315],[1066,305],[1090,345],[1117,517],[1140,517],[1166,473],[1190,507],[1215,465],[1240,460],[1265,380],[1290,352],[1313,333],[1338,382],[1363,350],[1388,385],[1413,455],[1437,390],[1462,396],[1487,330],[1510,345],[1535,285]];
const kdjK = [[30,435],[55,390],[80,365],[128,340],[155,355],[180,420],[205,450],[228,463],[278,503],[300,510],[328,520],[378,534],[425,505],[450,512],[474,505],[500,503],[548,522],[573,515],[600,480],[648,455],[672,448],[696,433],[721,436],[746,428],[771,448],[795,430],[845,345],[869,320],[918,287],[968,297],[992,288],[1017,302],[1042,310],[1066,308],[1090,330],[1117,400],[1140,418],[1166,410],[1190,435],[1215,428],[1240,427],[1265,403],[1313,375],[1338,385],[1363,375],[1388,385],[1413,417],[1437,392],[1462,395],[1487,368],[1510,367],[1535,340]];
const kdjD = [[30,435],[80,400],[128,370],[155,368],[180,390],[230,425],[278,465],[330,495],[378,517],[425,515],[474,508],[500,505],[548,515],[573,513],[600,503],[648,478],[696,458],[746,443],[771,443],[820,425],[869,370],[918,325],[968,307],[1017,300],[1066,303],[1090,315],[1140,365],[1190,400],[1250,418],[1265,408],[1313,390],[1363,382],[1388,385],[1413,395],[1437,393],[1462,392],[1510,380],[1535,367]];

function drawKdj(svg) {
    const map = pts => pts.map(p => [p[0] / 1.452, 1800 + p[1] / 3]);
    add(svg, 'line', { class: 'grid', x1: 15, x2: 1065, y1: 1905, y2: 1905 });
    poly(svg, 'line-j', map(kdjJ));
    poly(svg, 'line-k', map(kdjK));
    poly(svg, 'line-d', map(kdjD));
}

drawMain();
drawVolume();
drawHold();
document.querySelectorAll('.kdj-plot').forEach(drawKdj);
```
